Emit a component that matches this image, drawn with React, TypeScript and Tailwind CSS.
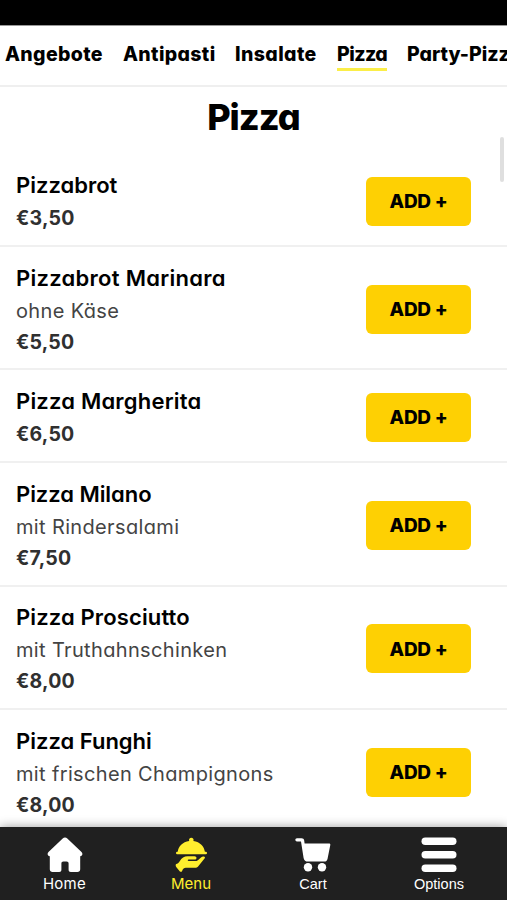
import React from "react";

const categories = [
  { id: 1, title: "Angebote", className: "w-[98px] tracking-[0.35px]" },
  { id: 2, title: "Antipasti", className: "w-[92px] tracking-[0.35px]" },
  { id: 3, title: "Insalate", className: "w-[82px] tracking-[0.4px]" },
  { id: 4, title: "Pizza", className: "w-[50px] tracking-[-0.55px] border-b-[3px] border-[#fbee48]" },
  { id: 5, title: "Party-Pizza", className: "w-[115px]" },
];

const pizzas = [
  { id: 1, title: "Pizzabrot", description: "", price: "€3,50", tracking: "" },
  { id: 2, title: "Pizzabrot Marinara", description: "ohne Käse", price: "€5,50", tracking: "tracking-[0.28px]" },
  { id: 3, title: "Pizza Margherita", description: "", price: "€6,50", tracking: "tracking-[0.2px]" },
  { id: 4, title: "Pizza Milano", description: "mit Rindersalami", price: "€7,50", tracking: "tracking-[-0.05px]" },
  { id: 5, title: "Pizza Prosciutto", description: "mit Truthahnschinken", price: "€8,00", tracking: "tracking-[0.13px]" },
  { id: 6, title: "Pizza Funghi", description: "mit frischen Champignons", price: "€8,00", tracking: "" },
];

const HomeIcon = () => (
  <svg width="36" height="36" viewBox="0 0 36 36" fill="currentColor">
    <path d="M18 .5c.9 0 1.600.3 2.300 1L34.500 15c1.700 1.700.8 4.200-1.300 4.200V32.200c0 1.700-1.100 2.800-2.800 2.800h-6.600c-1.400 0-2.200-.8-2.200-2.200v-6.300c0-1.300-.7-2-2-2h-3.200c-1.300 0-2 .7-2 2v6.300c0 1.400-.8 2.200-2.200 2.200H5.600c-1.700 0-2.800-1.100-2.800-2.800V19.200C.7 19.200-.2 16.700 1.500 15L15.700 1.500c.7-.7 1.400-1 2.300-1Z" />
  </svg>
);

const DishIcon = () => (
  <svg width="36" height="36" viewBox="0 0 36 36" fill="currentColor">
    <path d="M16.200 3.900a2.300 2.300 0 1 1 4.200 0C27 4.800 31.300 9.200 31.900 15H4.700C5.300 9.200 9.600 4.800 16.200 3.900Z" />
    <rect x="3" y="14.800" width="31" height="2.500" rx="1.200" />
    <path d="M3.200 27c1.300-.3 2.400-1.200 3.300-2.600C8.800 21 11.200 19.300 14.500 19.300h7c2.500 0 2.700 3.200.3 3.300h-6.200c-1.100 0-1.100 1.400 0 1.400h7c1.500 0 2.300-.8 3.400-1.800l2-1.800c.8-.8 1.700-1.100 2.700-1 1.300.1 1.700 1.100.8 2.200l-6.200 7.600c-.9 1.100-2 1.500-3.400 1.500h-9.100c-1.700 0-2.900 1-3.700 3.200-.3 1-1.400 1.300-2.200.5L3.600 30.500c-1.100-1.300-1.200-3-.4-3.500Z" />
  </svg>
);

const CartIcon = () => (
  <svg width="36" height="36" viewBox="0 0 36 36" fill="currentColor">
    <path d="M2 1.200h4.500C8 1.200 9 2 9.200 3.500l.4 3H34c1 0 1.500.7 1.300 1.600L32.500 22c-.4 1.700-1.500 2.600-3.200 2.600H13c-2.500 0-4-1.300-4.400-3.700L6 4.500H2c-2.200 0-2.200-3.300 0-3.300Z" />
    <circle cx="13" cy="30.300" r="4.200" />
    <circle cx="27" cy="30.300" r="4.200" />
  </svg>
);

const OptionsIcon = () => (
  <svg width="36" height="36" viewBox="0 0 36 36" fill="currentColor">
    <rect x="0.500" y="0.500" width="35" height="7.500" rx="3.750" />
    <rect x="0.500" y="14" width="35" height="7.500" rx="3.750" />
    <rect x="0.500" y="27.500" width="35" height="7.500" rx="3.750" />
  </svg>
);

const tabs = [
  { id: 1, title: "Home", Icon: HomeIcon, className: "w-[129px] text-white", label: "text-[15px] tracking-[0.3px]" },
  { id: 2, title: "Menu", Icon: DishIcon, className: "w-[124px] text-[#ffee2e]", label: "text-[15px]" },
  { id: 3, title: "Cart", Icon: CartIcon, className: "w-[120px] text-white", label: "text-[14.5px] font-['Liberation_Sans',sans-serif]" },
  { id: 4, title: "Options", Icon: OptionsIcon, className: "w-[132px] text-white", label: "text-[14.5px] font-['Liberation_Sans',sans-serif]" },
];

export default function App() {
  return (
    <div className="flex flex-col h-[900px] w-[507px] overflow-hidden bg-white text-black font-['Inter',sans-serif] [font-feature-settings:'cv11']">
      <div className="h-[25px] shrink-0 bg-black" />

      {/* CATEGORIES */}
      <nav className="flex h-[62px] shrink-0 gap-5 overflow-hidden border-t border-b-2 border-t-[#999] border-b-[#efefef] pl-[5px] pt-[13px]">
        {categories.map((category) => (
          <a
            key={category.id}
            href="#"
            className={`${category.className} h-8 shrink-0 whitespace-nowrap text-[19.5px] leading-[30px] font-extrabold`}
          >
            {category.title}
          </a>
        ))}
      </nav>

      {/* MENU LIST */}
      <main className="relative flex-1 overflow-hidden">
        <h1 className="h-[67px] pt-[7px] text-center text-[36px] leading-[46px] font-extrabold tracking-[-1px]">Pizza</h1>
        {pizzas.map((pizza) => (
          <article
            key={pizza.id}
            className={`${pizza.description ? "h-[123.4px]" : "h-[93px]"} flex items-center justify-between border-b-2 border-[#f0f0f0] pt-px pl-4 pr-9`}
          >
            <div>
              <h2 className={`${pizza.tracking} text-[22px] leading-[36px] font-semibold whitespace-nowrap`}>{pizza.title}</h2>
              {pizza.description && (
                <p className="text-[20px] leading-[31px] tracking-[0.35px] text-[#444]">{pizza.description}</p>
              )}
              <p className="text-[19.5px] leading-[30px] tracking-[0.2px] font-bold text-[#303030]">{pizza.price}</p>
            </div>
            <button className="mt-0.5 h-[49px] w-[105px] rounded-md bg-[#fed003] pt-0.5 text-[19px] font-extrabold tracking-[-0.3px]">
              ADD +
            </button>
          </article>
        ))}
        <div className="absolute top-[50px] right-[3px] h-[45px] w-1 rounded-full bg-[#dfdfdf]" />
      </main>

      {/* TAB BAR */}
      <footer className="relative flex h-[73px] shrink-0 bg-[#202020] pt-2.5 shadow-[0_0_10px_rgba(0,0,0,0.4)]">
        {tabs.map(({ id, title, Icon, className, label }) => (
          <a key={id} href="#" className={`${className} flex flex-col items-center`}>
            <Icon />
            <span className={`${label} leading-[22px]`}>{title}</span>
          </a>
        ))}
      </footer>
    </div>
  );
}
